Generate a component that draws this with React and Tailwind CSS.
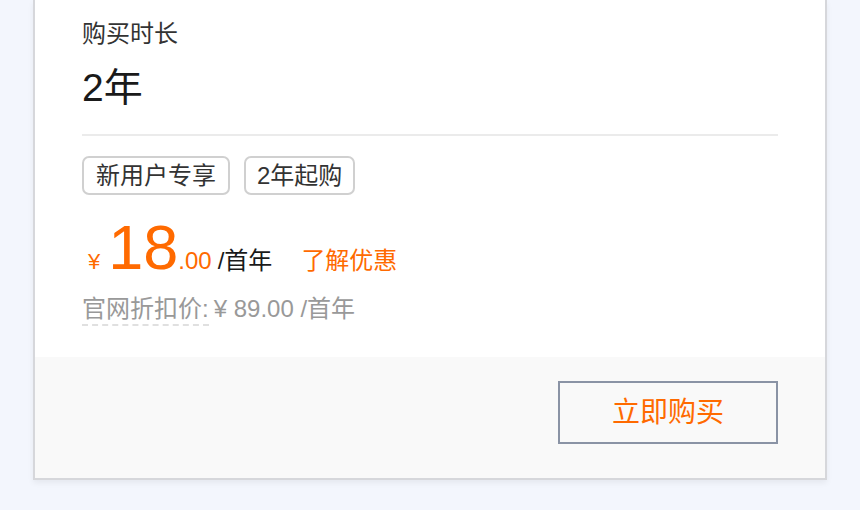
export default function App() {
  const font = { fontFamily: '"Liberation Sans", "Noto Sans CJK SC", sans-serif' };
  return (
    <div className="w-[860px] h-[510px] bg-[#f3f6fd] overflow-hidden" style={font}>
      <div className="ml-[33px] w-[794px] border-x-2 border-b-2 border-[#d6d7db] bg-white shadow-[0_3px_6px_rgba(0,0,0,0.06)]">
        <div className="px-[47px] pt-[16px] pb-[30px]">
          <div className="text-[24px] leading-[36px] text-[#333]">购买时长</div>
          <div className="mt-[14px] text-[39px] leading-[44px] text-[#1a1a1a]">2年</div>
          <div className="mt-[24px] h-[2px] bg-[#ebebeb]"></div>
          <div className="mt-[20px] flex gap-[14px]">
            <div className="h-[39px] px-[12px] flex items-center border-2 border-[#d0d0d0] rounded-[7px] text-[24px] text-[#333]">新用户专享</div>
            <div className="h-[39px] px-[11px] flex items-center border-2 border-[#d0d0d0] rounded-[7px] text-[24px] text-[#333]">2年起购</div>
          </div>
          <div className="mt-[16px] flex items-baseline h-[72px] leading-[72px]">
            <span className="text-[22px] text-[#ff6a00] ml-[6px] mr-[8px]">¥</span>
            <span className="text-[63px] text-[#ff6a00]">18</span>
            <span className="text-[24px] text-[#ff6a00]">.00</span>
            <span className="text-[24px] text-[#1a1a1a] ml-[6px]">/首年</span>
            <span className="text-[24px] text-[#ff6a00] ml-[29px]">了解优惠</span>
          </div>
          <div className="mt-[8px] text-[24px] leading-[36px] text-[#999]">
            <span className="border-b-2 border-dashed border-[#e0e0e0] pb-[2px]">官网折扣价:</span>
            <span className="ml-[5px]">¥ 89.00 /首年</span>
          </div>
        </div>
        <div className="bg-[#f9f9f9] h-[121px] flex justify-end items-start pt-[24px] px-[47px]">
          <button className="w-[220px] h-[63px] border-2 border-[#8a93a5] text-[#ff6a00] text-[28px] flex items-center justify-center">立即购买</button>
        </div>
      </div>
    </div>
  );
}
